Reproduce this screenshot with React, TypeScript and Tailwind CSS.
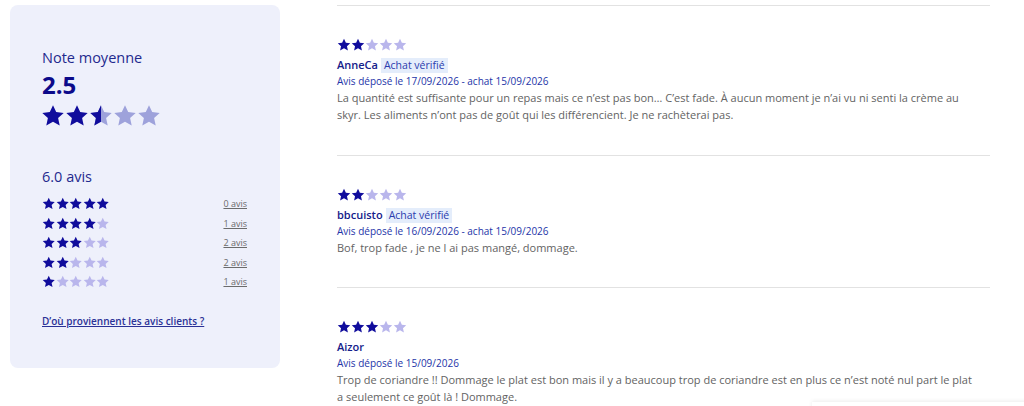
const font = "font-['Open_Sans',Arial,sans-serif]";

function Star({ size, color, half, light }: { size: number; color: string; half?: boolean; light?: string }) {
  const d =
    "M12 1.2l3.2 6.9 7.5.8-5.6 5.1 1.6 7.5L12 17.7l-6.7 3.8 1.6-7.5-5.6-5.1 7.5-.8z";
  return (
    <svg width={size} height={size} viewBox="0 0 24 24" className="shrink-0">
      {half ? (
        <>
          <defs>
            <clipPath id="half-left">
              <rect x="0" y="0" width="12" height="24" />
            </clipPath>
          </defs>
          <path d={d} fill={light} />
          <path d={d} fill={color} clipPath="url(#half-left)" />
        </>
      ) : (
        <path d={d} fill={color} />
      )}
    </svg>
  );
}

function Stars({ n, size, light = "#b9b6ec" }: { n: number; size: number; light?: string }) {
  return (
    <div className="flex items-center">
      {[1, 2, 3, 4, 5].map((i) => (
        <Star key={i} size={size} color={i <= n ? "#100c9c" : light} />
      ))}
    </div>
  );
}

const breakdown = [
  { n: 5, count: "0 avis" },
  { n: 4, count: "1 avis" },
  { n: 3, count: "2 avis" },
  { n: 2, count: "2 avis" },
  { n: 1, count: "1 avis" },
];

const reviews = [
  {
    stars: 2,
    name: "AnneCa",
    verified: true,
    date: "Avis déposé le 17/09/2026 - achat 15/09/2026",
    text: "La quantité est suffisante pour un repas mais ce n’est pas bon… C’est fade. À aucun moment je n’ai vu ni senti la crème au skyr. Les aliments n’ont pas de goût qui les différencient. Je ne rachèterai pas.",
    pb: "pb-[32px]",
  },
  {
    stars: 2,
    name: "bbcuisto",
    verified: true,
    date: "Avis déposé le 16/09/2026 - achat 15/09/2026",
    text: "Bof, trop fade , je ne l ai pas mangé, dommage.",
    pb: "pb-[31px]",
  },
  {
    stars: 3,
    name: "Aizor",
    verified: false,
    date: "Avis déposé le 15/09/2026",
    text: "Trop de coriandre !! Dommage le plat est bon mais il y a beaucoup trop de coriandre est en plus ce n’est noté nul part le plat a seulement ce goût là ! Dommage.",
    pb: "pb-[32px]",
  },
];

export default function App() {
  return (
    <div className={`relative w-[1024px] h-[406px] overflow-hidden bg-white ${font}`}>
      <div className="flex pt-[5px]">
        {/* summary card */}
        <div className="ml-[10px] w-[270px] h-[363px] shrink-0 rounded-lg bg-[#eef0fb] pl-[32px] pr-[33px] pt-[43px]">
          <p className="text-[14.5px] leading-[20px] text-[#1f2a8e]">Note moyenne</p>
          <p className="mt-[3px] text-[24px] leading-[28px] font-bold text-[#0c0a8a]">2.5</p>
          <div className="mt-[5px] flex items-center -ml-[1px]">
            <Star size={24} color="#100c9c" />
            <Star size={24} color="#100c9c" />
            <Star size={24} color="#100c9c" half light="#9ea2db" />
            <Star size={24} color="#9ea2db" />
            <Star size={24} color="#9ea2db" />
          </div>
          <p className="mt-[39px] text-[14.5px] leading-[20px] text-[#1f2a8e]">6.0 avis</p>
          <div className="mt-[7px] flex flex-col">
            {breakdown.map((b) => (
              <div key={b.n} className="flex h-[19.5px] items-center justify-between">
                <Stars n={b.n} size={13.5} />
                <span className="text-[9px] text-[#6b6b6b] underline">{b.count}</span>
              </div>
            ))}
          </div>
          <a className="mt-[22px] block text-[10px] font-semibold text-[#2a3196] underline">
            D’où proviennent les avis clients ?
          </a>
        </div>

        {/* reviews */}
        <div className="ml-[57px] w-[653px] shrink-0">
          {reviews.map((r) => (
            <div key={r.name} className={`border-t border-[#e2e2e2] pt-[32px] ${r.pb}`}>
              <div className="h-[14px] flex items-center">
                <Stars n={r.stars} size={14} />
              </div>
              <div className="mt-[5px] h-[16px] flex items-center gap-[3px]">
                <span className="text-[11px] font-semibold text-[#14208a]">{r.name}</span>
                {r.verified && (
                  <span className="bg-[#e4edfb] px-[3px] text-[10.5px] leading-[15px] text-[#2a3cae]">
                    Achat vérifié
                  </span>
                )}
              </div>
              <p className="h-[16px] text-[10px] leading-[16px] text-[#2434a8]">{r.date}</p>
              <p className="pr-[10px] text-[11px] leading-[17px] text-[#636363]">{r.text}</p>
            </div>
          ))}
        </div>
      </div>
      <div className="absolute left-[812px] top-[402px] h-[30px] w-[220px] bg-white shadow-[0_-1px_4px_rgba(0,0,0,0.08)]" />
    </div>
  );
}
